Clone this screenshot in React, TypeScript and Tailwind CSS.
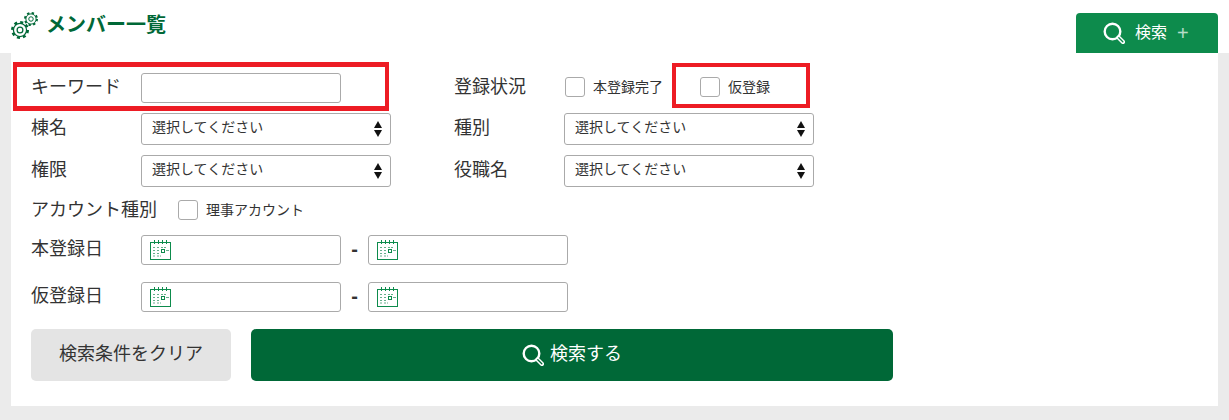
const font = { jp: "font-['Liberation_Sans','Noto_Sans_CJK_JP',sans-serif]" };

const SearchIcon = ({ size, handle }: { size: number; handle: string }) => (
  <svg width={size} height={size} viewBox="0 0 22 22" fill="none" stroke="white">
    <circle cx="9.500" cy="9.500" r="7.800" strokeWidth="2.400" />
    <path d="M15.500 15.500l4.500 4.500" strokeWidth="4.200" strokeLinecap="round" />
    <path d="M15.800 15.800l4 4" strokeWidth="1.300" stroke={handle} strokeLinecap="round" />
  </svg>
);

const Gear = ({ size }: { size: number }) => (
  <svg width={size} height={size} viewBox="0 0 20 20" fill="none">
    <circle cx="10" cy="10" r="8.500" stroke="#006837" strokeWidth="3" strokeDasharray="3.300 3.370" />
    <circle cx="10" cy="10" r="7.300" fill="white" stroke="#006837" strokeWidth="1.400" />
    <circle cx="10" cy="10" r="3.200" fill="white" stroke="#006837" strokeWidth="1.400" />
  </svg>
);

const CalendarIcon = () => (
  <svg width="21" height="20" viewBox="0 0 21 20" fill="none" className="shrink-0">
    <rect x="0.500" y="2.500" width="20" height="17" fill="white" stroke="#0d8b4c" />
    <path d="M4.500 0v4M8.500 0v4M12.500 0v4M16.500 0v4" stroke="#0d8b4c" />
    <path
      d="M3 7.500h2M7 7.500h2M11 7.500h2M14 7.500h2M3 10.500h2M7 10.500h2M16 10.500h3M3 13.500h2M7 13.500h2M3 16h2M7 16h2M10 16h1"
      stroke="#66b08c"
    />
    <rect x="11.500" y="9.500" width="3" height="3" stroke="#0d8b4c" />
  </svg>
);

const Checkbox = ({ label }: { label: string }) => (
  <label className="flex items-center gap-[8px]">
    <span className="h-[20px] w-[20px] rounded-[3px] border border-[#aaa] bg-white" />
    <span className="text-[14px] text-[#333]">{label}</span>
  </label>
);

const Select = () => (
  <div className="flex h-[32px] w-[250px] items-center justify-between rounded-[3px] border border-[#aaa] bg-white pl-[10px] pr-[8px]">
    <span className="mb-[3px] text-[14px] text-[#333]">選択してください</span>
    <span className="flex flex-col gap-[2px]">
      <span className="h-0 w-0 border-x-[4px] border-b-[7px] border-x-transparent border-b-[#111]" />
      <span className="h-0 w-0 border-x-[4px] border-t-[7px] border-x-transparent border-t-[#111]" />
    </span>
  </div>
);

const DateInput = () => (
  <div className="flex h-[30px] w-[200px] items-center rounded-[3px] border border-[#aaa] bg-white pl-[8px]">
    <CalendarIcon />
  </div>
);

const Label = ({ children }: { children: string }) => (
  <span className="mb-[2px] w-[110px] shrink-0 text-[18px] leading-[24px] text-[#333]">{children}</span>
);

const DateRow = ({ label }: { label: string }) => (
  <div className="flex h-[30px] items-center">
    <Label>{label}</Label>
    <DateInput />
    <span className="mb-[2px] w-[27px] text-center text-[20px] font-bold leading-[24px] text-[#333]">-</span>
    <DateInput />
  </div>
);

export default function App() {
  return (
    <div className={`relative h-[420px] w-[1229px] overflow-hidden bg-[#ebebeb] ${font.jp}`}>
      <header className="flex h-[53px] items-start justify-between bg-white pl-[11px] pr-[11px]">
        <div className="mt-[9px] flex items-center">
          <span className="relative block h-[28px] w-[27px]">
            <span className="absolute bottom-0 left-0 block h-[18px] w-[18px]">
              <Gear size={18} />
            </span>
            <span className="absolute right-0 top-[1px] block h-[14px] w-[14px]">
              <Gear size={14} />
            </span>
          </span>
          <h1 className="ml-[8px] mt-[1px] text-[20px] font-bold leading-[30px] text-[#006837]">メンバー一覧</h1>
        </div>
        <button className="mt-[13px] flex h-[40px] w-[142px] items-center rounded-t-[4px] bg-[#0d8b4c] pl-[27px] text-[16px] text-white">
          <SearchIcon size={22} handle="#0d8b4c" />
          <span className="ml-[10px]">検索</span>
          <span className="ml-[10px] text-[20px] font-light leading-none opacity-70">+</span>
        </button>
      </header>

      <main className="mx-[11px] h-[353px] bg-white pl-[20px] pt-[20px]">
        <div className="flex h-[30px] items-center">
          <Label>キーワード</Label>
          <div className="h-[30px] w-[200px] rounded-[3px] border border-[#aaa] bg-white" />
          <span className="mb-[2px] ml-[113px] w-[111px] text-[18px] leading-[24px] text-[#333]">登録状況</span>
          <div className="mb-[2px] flex items-center">
            <Checkbox label="本登録完了" />
            <div className="ml-[37px]">
              <Checkbox label="仮登録" />
            </div>
          </div>
        </div>

        <div className="mt-[10px] flex h-[32px] items-center">
          <Label>棟名</Label>
          <Select />
          <span className="mb-[2px] ml-[63px] w-[110px] text-[18px] leading-[24px] text-[#333]">種別</span>
          <Select />
        </div>

        <div className="mt-[10px] flex h-[32px] items-center">
          <Label>権限</Label>
          <Select />
          <span className="mb-[2px] ml-[63px] w-[110px] text-[18px] leading-[24px] text-[#333]">役職名</span>
          <Select />
        </div>

        <div className="mt-[13px] flex h-[20px] items-center">
          <span className="w-[147px] shrink-0 text-[18px] leading-[24px] text-[#333]">アカウント種別</span>
          <Checkbox label="理事アカウント" />
        </div>

        <div className="mt-[15px] flex flex-col gap-[17px]">
          <DateRow label="本登録日" />
          <DateRow label="仮登録日" />
        </div>

        <div className="mt-[17px] flex gap-[20px]">
          <button className="h-[52px] w-[200px] rounded-[5px] bg-[#e4e4e4] pb-[2px] text-[18px] text-[#333]">
            検索条件をクリア
          </button>
          <button className="flex h-[52px] w-[642px] items-center justify-center gap-[6px] rounded-[5px] bg-[#006837] text-[18px] text-white">
            <SearchIcon size={22} handle="#006837" />
            <span className="mb-[2px]">検索する</span>
          </button>
        </div>
      </main>

      <div className="absolute left-[13px] top-[62px] h-[49px] w-[376px] border-x-[4px] border-y-[5px] border-[#ed1c24]" />
      <div className="absolute left-[672px] top-[63px] h-[45px] w-[138px] border-[4px] border-[#ed1c24]" />
    </div>
  );
}
